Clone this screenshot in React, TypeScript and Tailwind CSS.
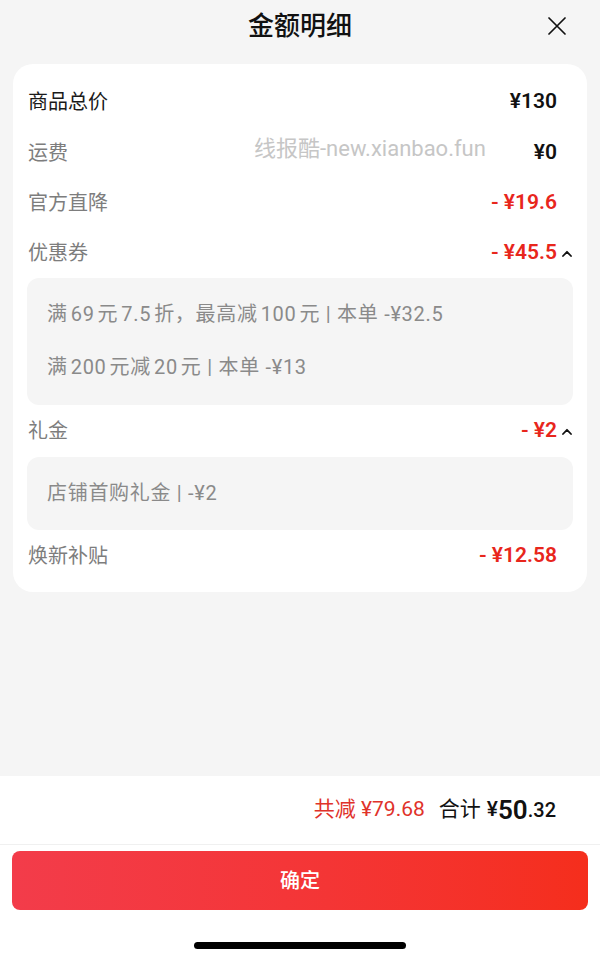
import React from "react";

const FONT = { fontFamily: 'Roboto, "Noto Sans CJK SC", sans-serif' };

function Chevron() {
  return (
    <svg width="10" height="7" viewBox="0 0 10 7" className="ml-[5px]">
      <path d="M1 6 L5 1.8 L9 6" fill="none" stroke="#111" strokeWidth="1.8" strokeLinecap="round" strokeLinejoin="round" />
    </svg>
  );
}

function Row({
  label,
  value,
  dark,
  red,
  chevron,
  h,
}: {
  label: string;
  value: string;
  dark?: boolean;
  red?: boolean;
  chevron?: boolean;
  h: string;
}) {
  return (
    <div className={`flex items-center ${h}`}>
      <div className={`pl-[1px] text-[20px] ${dark ? "text-[#1a1a1a]" : "text-[#7d7d7d]"}`}>{label}</div>
      <div className="flex-1" />
      <div className={`text-[21px] font-semibold ${red ? "text-[#e8261c]" : "text-[#111]"}`}>{value}</div>
      <div className="w-[16px] flex items-center">{chevron ? <Chevron /> : null}</div>
    </div>
  );
}

function N({ children }: { children: React.ReactNode }) {
  return <span className="mx-[3px]">{children}</span>;
}

export default function App() {
  return (
    <div className="relative w-[600px] h-[963px] flex flex-col bg-[#f5f5f5] overflow-hidden" style={FONT}>
      <div className="relative h-[52px] flex items-center justify-center">
        <div className="text-[26px] font-medium text-[#111] leading-none">金额明细</div>
        <svg className="absolute left-[548px] top-[17px]" width="18" height="18" viewBox="0 0 18 18">
          <path d="M1 1 L17 17 M17 1 L1 17" stroke="#111" strokeWidth="1.7" strokeLinecap="round" />
        </svg>
      </div>

      <div className="mx-[13px] mt-[12px] bg-white rounded-[20px] px-[14px] pt-[13px] pb-[10px]">
        <Row label="商品总价" value="¥130" dark h="h-[50px]" />
        <Row label="运费" value="¥0" h="h-[51px]" />
        <Row label="官方直降" value="- ¥19.6" red h="h-[50px]" />
        <Row label="优惠券" value="- ¥45.5" red chevron h="h-[50px]" />
        <div className="bg-[#f5f5f5] rounded-[12px] h-[127px] py-[10px] pl-[20px] text-[20px] tracking-[0.7px] text-[#8a8a8a]">
          <div className="leading-[53px]">
            满<N>69</N>元<N>7.5</N>折，最高减<N>100</N>元 | 本单 -¥32.5
          </div>
          <div className="leading-[53px]">
            满<N>200</N>元减<N>20</N>元 | 本单 -¥13
          </div>
        </div>
        <Row label="礼金" value="- ¥2" red chevron h="h-[52px]" />
        <div className="bg-[#f5f5f5] rounded-[12px] h-[73px] py-[10px] pl-[20px] text-[20px] tracking-[0.7px] text-[#8a8a8a]">
          <div className="leading-[53px]">店铺首购礼金 | -¥2</div>
        </div>
        <Row label="焕新补贴" value="- ¥12.58" red h="h-[52px]" />
      </div>

      <div className="flex-1" />

      <div className="bg-white h-[187px] flex flex-col">
        <div className="h-[69px] flex items-center justify-end pr-[44px] border-b border-[#f0f0f0]">
          <span className="text-[21px] text-[#e0322a]">共减 ¥79.68</span>
          <span className="ml-[14px] text-[21px] text-[#111]">合计</span>
          <span className="ml-[6px] text-[21px] text-[#111] font-medium">¥</span>
          <span className="text-[26px] text-[#111] font-semibold">50</span>
          <span className="text-[20px] text-[#111] font-medium">.32</span>
        </div>
        <div className="mx-[12px] mt-[6px] h-[59px] rounded-[8px] bg-gradient-to-r from-[#f33c4a] to-[#f52e1c] flex items-center justify-center">
          <span className="text-[20px] font-medium text-white">确定</span>
        </div>
        <div className="mt-[32px] mx-auto w-[212px] h-[7px] rounded-full bg-black" />
      </div>

      <div className="absolute left-[254px] top-[136px] text-[22px] leading-[26px] text-[#c6c6c6]">线报酷-new.xianbao.fun</div>
    </div>
  );
}
